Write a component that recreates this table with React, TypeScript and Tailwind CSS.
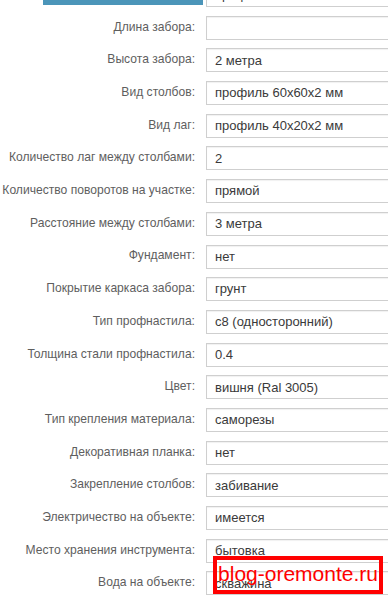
const rows: [string, string][] = [
  ["Длина забора:", ""],
  ["Высота забора:", "2 метра"],
  ["Вид столбов:", "профиль 60x60x2 мм"],
  ["Вид лаг:", "профиль 40x20x2 мм"],
  ["Количество лаг между столбами:", "2"],
  ["Количество поворотов на участке:", "прямой"],
  ["Расстояние между столбами:", "3 метра"],
  ["Фундамент:", "нет"],
  ["Покрытие каркаса забора:", "грунт"],
  ["Тип профнастила:", "с8 (односторонний)"],
  ["Толщина стали профнастила:", "0.4"],
  ["Цвет:", "вишня (Ral 3005)"],
  ["Тип крепления материала:", "саморезы"],
  ["Декоративная планка:", "нет"],
  ["Закрепление столбов:", "забивание"],
  ["Электричество на объекте:", "имеется"],
  ["Место хранения инструмента:", "бытовка"],
  ["Вода на объекте:", "скважина"],
];

function Field({ value }: { value: string }) {
  return (
    <div className="h-[24px] w-[190px] shrink-0 border border-[#cfcfcf] bg-white pl-[8px] flex items-center text-[13px] text-[#3a3a3a] shadow-[inset_0_1px_1px_rgba(0,0,0,0.06)]">
      {value}
    </div>
  );
}

export default function App() {
  return (
    <div
      className="relative w-[388px] h-[598px] overflow-hidden bg-white"
      style={{ fontFamily: '"Liberation Sans", Arial, sans-serif' }}
    >
      <div className="flex flex-col gap-[8.7px] mt-[-17px]">
        <div className="flex items-start gap-[3px]">
          <div className="w-[203px] shrink-0 flex justify-end">
            <div className="h-[22px] w-[160px] bg-[#4b95b9]" />
          </div>
          <Field value="профлист" />
        </div>
        {rows.map(([label, value]) => (
          <div key={label} className="flex items-center gap-[11px]">
            <div className="w-[195px] shrink-0 text-right text-[12.1px] text-[#5e5e5e] leading-none pb-[2px] whitespace-nowrap">
              {label}
            </div>
            <Field value={value} />
          </div>
        ))}
      </div>
      <div className="absolute left-[213px] top-[556px] w-[170px] h-[38px] border-[4px] border-[#ff0000] flex items-center justify-center text-[21px] text-[#ff0000] leading-none pb-[3px]">
        blog-oremonte.ru
      </div>
    </div>
  );
}
